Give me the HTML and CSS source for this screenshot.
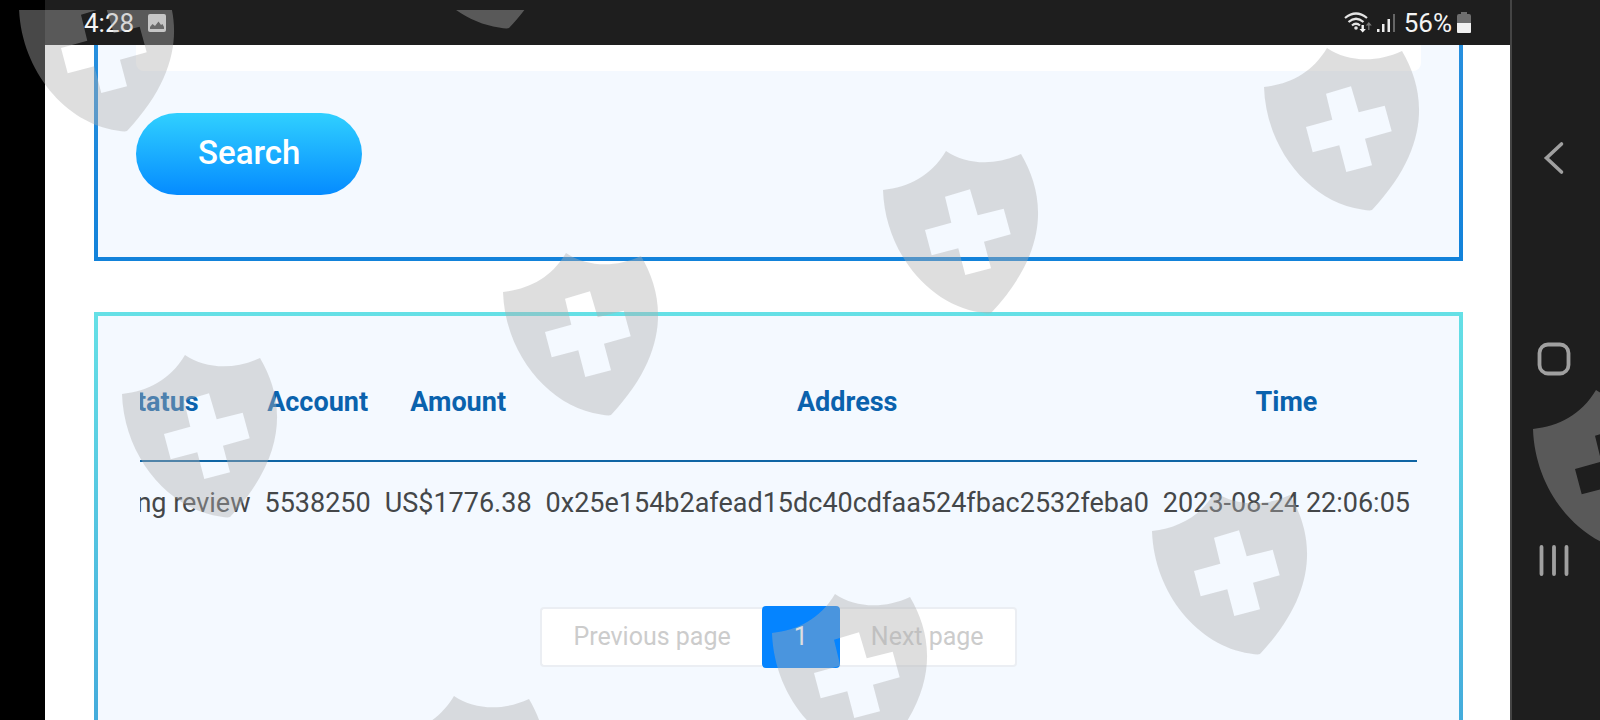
FILE: index.html
```html
<!DOCTYPE html>
<html lang="en">
<head>
<meta charset="utf-8">
<meta name="viewport" content="width=device-width, initial-scale=1">
<title>Search records</title>
<link rel="stylesheet" href="styles.css">
</head>
<body>
<div class="device">
  <div class="screen">
    <header class="status">
      <div class="status-group status-left">
        <span class="clock">4:28</span>
        <svg class="photo" viewBox="0 0 18 18" aria-hidden="true"><rect width="18" height="18" rx="2" fill="#d6d6d6"/><path d="M2 15v-2l2.500-3 2.500 2L10.500 7.500 13 11l1.500-1L16 13v2z" fill="#3a3a3a"/></svg>
      </div>
      <div class="status-group status-right">
        <svg class="wifi" viewBox="0 0 28 22" aria-hidden="true"><g fill="none" stroke="#e4e4e4" stroke-width="2.200"><path d="M1 6Q12-3 23 6"/><path d="M4.500 10Q12 3.500 19.500 10"/><path d="M8 13.500Q12 10 16 13.500"/></g><circle cx="12" cy="16" r="1.800" fill="#e4e4e4"/><path d="M17.500 13v4h-2l3.200 3.500 3.200-3.500h-2v-4z" fill="#f4f4f4"/><path d="M24.200 18v-4.500h-2.400l3-3.500 3 3.500h-2.400V18z" fill="#777"/></svg>
        <svg class="signal" viewBox="0 0 18 20" aria-hidden="true"><g fill="#ededed"><rect y="16" width="2.500" height="3"/><rect x="5" y="11" width="2.500" height="8"/><rect x="10.500" y="6" width="2.500" height="13"/></g><rect x="16" y="1" width="2" height="18" fill="#666"/></svg>
        <span class="percent">56%</span>
        <svg class="battery" viewBox="0 0 14 22" aria-hidden="true"><path d="M4 0h6v2h2q2 0 2 2v7H0V4q0-2 2-2h2z" fill="#6e6e6e"/><path d="M0 11h14v9q0 1-1 1H1q-1 0-1-1z" fill="#f0f0f0"/></svg>
      </div>
    </header>
    <main class="content">
      <form class="panel search-panel">
        <input class="field" type="text" aria-label="Search term">
        <button class="search" type="button">Search</button>
      </form>
      <section class="panel results">
        <div class="scroller">
          <table class="records">
            <thead>
              <tr><th scope="col">Status</th><th scope="col">Account</th><th scope="col">Amount</th><th scope="col">Address</th><th scope="col">Time</th></tr>
            </thead>
            <tbody>
              <tr><td>Pending review</td><td>5538250</td><td>US$1776.38</td><td>0x25e154b2afead15dc40cdfaa524fbac2532feba0</td><td>2023-08-24 22:06:05</td></tr>
            </tbody>
          </table>
        </div>
        <nav class="pager" aria-label="Pages">
          <button class="page prev" type="button">Previous page</button>
          <button class="page current" type="button" aria-current="page">1</button>
          <button class="page next" type="button">Next page</button>
        </nav>
      </section>
    </main>
  </div>
  <nav class="system" aria-label="System">
    <button class="key" type="button" aria-label="Back"><svg width="34" height="34" viewBox="0 0 34 34"><path d="M24.500 3 9.500 17 24.500 31" fill="none" stroke="#a0a0a0" stroke-width="3.600" stroke-linecap="round"/></svg></button>
    <button class="key" type="button" aria-label="Home"><svg width="34" height="34" viewBox="0 0 34 34"><rect x="2.500" y="2.500" width="29" height="29" rx="8.500" fill="none" stroke="#a0a0a0" stroke-width="3.800"/></svg></button>
    <button class="key" type="button" aria-label="Recent apps"><svg width="34" height="34" viewBox="0 0 34 34"><path d="M4.500 4v27M17 4v27M29.500 4v27" fill="none" stroke="#a0a0a0" stroke-width="3.800" stroke-linecap="round"/></svg></button>
  </nav>
  <svg class="marks" aria-hidden="true">
    <defs>
      <path id="shield" fill-rule="evenodd" d="M0 0C26-3 48-14 63-39C84-25 112-24 138-36C161 3 169 58 108 123Q106 124 98 122.500C46 115 2 62 0 0ZM62 6.700 68.300 32.700 42 40 48.700 65.300 75.300 58.300 82.300 85 108 78.300 101 51.700 127.700 44.300 120.700 18.700 94.700 25.300 87-.7Z"/>
    </defs>
    <use href="#shield" x="19" y="-2"/>
    <use href="#shield" x="401" y="-105"/>
    <use href="#shield" x="1264" y="77"/>
    <use href="#shield" x="883" y="180"/>
    <use href="#shield" x="503" y="282"/>
    <use href="#shield" x="122" y="384"/>
    <use href="#shield" x="1533" y="419"/>
    <use href="#shield" x="1152" y="521"/>
    <use href="#shield" x="772" y="623"/>
    <use href="#shield" x="391" y="725"/>
  </svg>
</div>
</body>
</html>
```
FILE: styles.css
```css
* { box-sizing: border-box; }
body {
  margin: 0;
  background: #000;
  font-family: Roboto, "Liberation Sans", sans-serif;
}
button, input { font: inherit; border: 0; padding: 0; }
.device {
  position: relative;
  display: grid;
  grid-template-columns: minmax(0, 1fr) 90px;
  height: 100vh;
  padding-left: 45px;
  overflow: hidden;
}
.screen {
  display: flex;
  flex-direction: column;
  min-height: 0;
  background: #fff;
}
.status {
  flex: none;
  display: flex;
  justify-content: space-between;
  align-items: center;
  height: 45px;
  padding: 0 39px;
  background: #1e1e1e;
  color: #f4f4f4;
  font-size: 26px;
  line-height: 30px;
}
.status-group { display: flex; align-items: center; }
.status-left { gap: 14px; }
.status-right { gap: 5px; }
.photo { width: 18px; height: 18px; }
.wifi { width: 28px; height: 22px; }
.signal { width: 18px; height: 20px; }
.percent { padding-left: 4px; }
.battery { width: 14px; height: 22px; }
.content {
  flex: 1;
  min-height: 0;
  display: flex;
  flex-direction: column;
  gap: 51px;
  padding: 0 47px 0 49px;
  overflow: hidden;
}
.panel {
  background: #f4f9ff;
  border: 4px solid #1284dc;
}
.search-panel {
  flex: none;
  padding: 0 38px 62px;
  border-top: 0;
  border-image: linear-gradient(#2890de, #1282da) 4;
  border-image-width: 0 4px 4px;
}
.field {
  display: block;
  width: 100%;
  height: 26px;
  margin-bottom: 42px;
  padding: 0 16px;
  border-radius: 0 0 8px 8px;
  background: #fff;
}
.search {
  display: block;
  height: 82px;
  padding: 0 62px 4px;
  border-radius: 41px;
  background: linear-gradient(#30d0ff, #058bff);
  color: #fff;
  font-size: 33px;
  font-weight: 500;
}
.results {
  flex: 1 0 700px;
  padding: 28px 42px;
  border-image: linear-gradient(#65e0e6, #2c86d4) 4;
}
.scroller {
  display: flex;
  justify-content: flex-end;
  overflow: hidden;
}
.records {
  flex: none;
  border-collapse: collapse;
  color: #444749;
  font-size: 27px;
  white-space: nowrap;
}
.records th {
  height: 117px;
  padding: 0 7px;
  border-bottom: 2px solid #0f65a4;
  color: #0a62ad;
  font-weight: 700;
}
.records td {
  height: 83px;
  padding: 0 7px;
}
.pager {
  display: flex;
  justify-content: center;
  align-items: center;
  margin-top: 62px;
}
.page {
  height: 60px;
  padding: 0 31px 2px;
  border: 2px solid #ebeef3;
  background: #fff;
  color: #ccc;
  font-size: 25px;
}
.prev { border-right: 0; border-radius: 4px 0 0 4px; }
.next { border-left: 0; border-radius: 0 4px 4px 0; }
.current {
  height: 62px;
  padding: 0 32px 2px;
  border: 0;
  border-radius: 4px;
  background: #0584ff;
  color: #fff;
}
.system {
  display: flex;
  flex-direction: column;
  padding: 57px 0 60px;
  border-left: 2px solid #444;
  background: #1e1e1e;
}
.key {
  flex: 1;
  display: grid;
  place-items: center;
  padding-right: 4px;
  background: none;
}
.marks {
  position: absolute;
  inset: 10px 0 0;
  width: 100%;
  height: 100%;
  overflow: hidden;
  pointer-events: none;
  fill: rgba(174, 174, 174, .41);
}
```
